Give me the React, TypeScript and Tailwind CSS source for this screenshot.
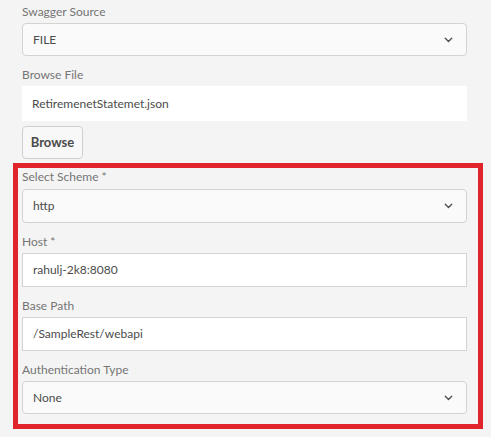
import React from "react";

const Chevron = () => (
  <svg width="9" height="6" viewBox="0 0 9 6" className="shrink-0">
    <path d="M1.3 1.3 L4.5 4.4 L7.7 1.3" fill="none" stroke="#505050" strokeWidth="1.4" strokeLinecap="round" strokeLinejoin="round" />
  </svg>
);

const Label = ({ children }: { children: React.ReactNode }) => (
  <div className="h-[18px] leading-[18px] text-[12px] text-[#747474] mb-[2px]">{children}</div>
);

const Select = ({ value, h = "h-[34px]" }: { value: string; h?: string }) => (
  <div className={`${h} flex items-center justify-between rounded-[4px] border border-[#d3d3d3] bg-[#fafafa] pl-[10px] pr-[13px] text-[12px] text-[#4b4b4b]`}>
    <span>{value}</span>
    <Chevron />
  </div>
);

const Input = ({ value }: { value: string }) => (
  <div className="h-[34px] flex items-center border border-[#d3d3d3] bg-white pl-[10px] text-[12px] text-[#4b4b4b]">
    {value}
  </div>
);

export default function App() {
  return (
    <div
      className="min-h-screen w-[491px] bg-[#f4f4f4] pl-[22px] pt-[3px]"
      style={{ fontFamily: "Lato, 'Open Sans', sans-serif" }}
    >
      <div className="w-[445px]">
        <Label>Swagger Source</Label>
        <Select value="FILE" h="h-[33px]" />
        <div className="h-[10px]" />
        <Label>Browse File</Label>
        <div className="h-[35px] flex items-center bg-white pl-[10px] text-[12px] text-[#4b4b4b]">
          RetiremenetStatemet.json
        </div>
        <div className="mt-[5px] h-[33px] w-[61px] flex items-center justify-center rounded-[4px] border border-[#cfcfcf] bg-[#f8f8f8] text-[13px] font-bold text-[#4b4b4b]">
          Browse
        </div>
        <div className="mt-[4px] -ml-[9px] w-[470px] border-[5px] border-[#e0242c] pl-[4px] pr-[11px] pt-[0px] pb-[10px]">
          <Label>Select Scheme *</Label>
          <div className="h-[1px]" />
          <Select value="http" />
          <div className="h-[10px]" />
          <Label>Host *</Label>
          <Input value="rahulj-2k8:8080" />
          <div className="h-[10px]" />
          <Label>Base Path</Label>
          <Input value="/SampleRest/webapi" />
          <div className="h-[10px]" />
          <Label>Authentication Type</Label>
          <Select value="None" h="h-[33px]" />
        </div>
      </div>
    </div>
  );
}
